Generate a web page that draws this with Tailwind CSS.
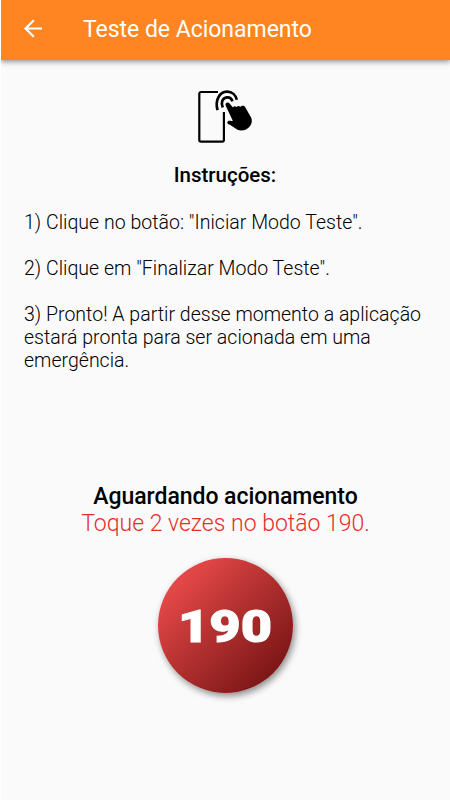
<!DOCTYPE html>
<html lang="pt-BR">
<head>
  <meta charset="UTF-8">
  <meta name="viewport" content="width=device-width, initial-scale=1.0">
  <title>Teste de Acionamento</title>
  <script src="https://cdn.jsdelivr.net/npm/@tailwindcss/browser@4"></script>
</head>
<body class="h-[800px] overflow-hidden bg-[#fafafa] border-l border-white font-['Roboto',sans-serif] text-black">
  <!-- App bar -->
  <header class="flex h-[60px] items-center bg-[#ff8522] pl-[23px] text-white shadow-[0_2px_5px_rgba(0,0,0,0.4)]">
    <svg class="-mt-1 size-[19px]" viewBox="0 0 19 19" fill="none" stroke="currentColor" stroke-width="2.2">
      <path d="M18 9.5H2M9.8 1.2L1.5 9.5l8.3 8.3"/>
    </svg>
    <h1 class="ml-[40px] text-[23px] tracking-[-0.03px] whitespace-nowrap">Teste de Acionamento</h1>
  </header>

  <main class="flex flex-col">
    <!-- Phone with tapping hand -->
    <svg class="mt-[29px] ml-[195px] h-[56px] w-[60px]" viewBox="0 0 60 56" fill="none">
      <path d="M22 3H5a1.700 1.700 0 0 0-1.700 1.700v46.300a1.700 1.700 0 0 0 1.700 1.700h21.200a1.700 1.700 0 0 0 1.700-1.700V23" stroke="black" stroke-width="2.200"/>
      <path d="M21.600 21.200C18.800 12 23 2.800 31 2.700C36 2.600 39.800 6 40.800 10.800M26.800 18.500C24.500 14 26.500 8.600 30.900 8.300C33.800 8.100 35.700 9.700 36.400 12.300" stroke="black" stroke-width="2.700"/>
      <path d="M29.900 14.200c1.200-1.200 2.900-1 3.700.3l3.400 4c.8-1.500 2.500-1.500 3.600-.3.800-1.400 2.700-1.400 3.700-.2.900-1.400 3.700-2 4.800-.1l6 10.600c1.300 2.600.9 6.200-1.200 8.700-2.800 3.800-7.800 5.100-12.400 3.600l-8-5.200c-1.700-.6-3.100-2.200-1.500-3.400 1.100-.8 3.300.1 4.800-.4l-6.700-14.400c-.6-1.200-.8-2.400-.2-3.200z" fill="black"/>
    </svg>

    <h2 class="mt-[18px] pr-px text-center text-[20.500px] leading-6 font-medium">Instruções:</h2>

    <div class="mt-[24px] flex flex-col gap-[23px] pl-[23px] text-[19.500px] leading-[23px] tracking-[0.02px] font-light whitespace-nowrap">
      <p>1) Clique no botão: "Iniciar Modo Teste".</p>
      <p>2) Clique em "Finalizar Modo Teste".</p>
      <p>3) Pronto! A partir desse momento a aplicação<br>estará pronta para ser acionada em uma<br>emergência.</p>
    </div>

    <!-- Status -->
    <div class="mt-[111px] text-center text-[23px] leading-[27px]">
      <p class="font-medium tracking-[-0.05px]">Aguardando acionamento</p>
      <p class="font-light text-[#e62e2c]">Toque 2 vezes no botão 190.</p>
    </div>

    <button class="mt-[20.5px] ml-[157px] size-[135px] rounded-full bg-linear-135 from-[#e24646] from-18% to-[#701010] to-95% shadow-[2px_3px_7px_rgba(0,0,0,0.45)]">
      <svg class="size-full" viewBox="0 0 135 135">
        <text x="20" y="83.500" textLength="94" lengthAdjust="spacingAndGlyphs" class="fill-white stroke-white stroke-1 font-['Roboto'] text-[45px] font-black">190</text>
      </svg>
    </button>
  </main>
</body>
</html>
